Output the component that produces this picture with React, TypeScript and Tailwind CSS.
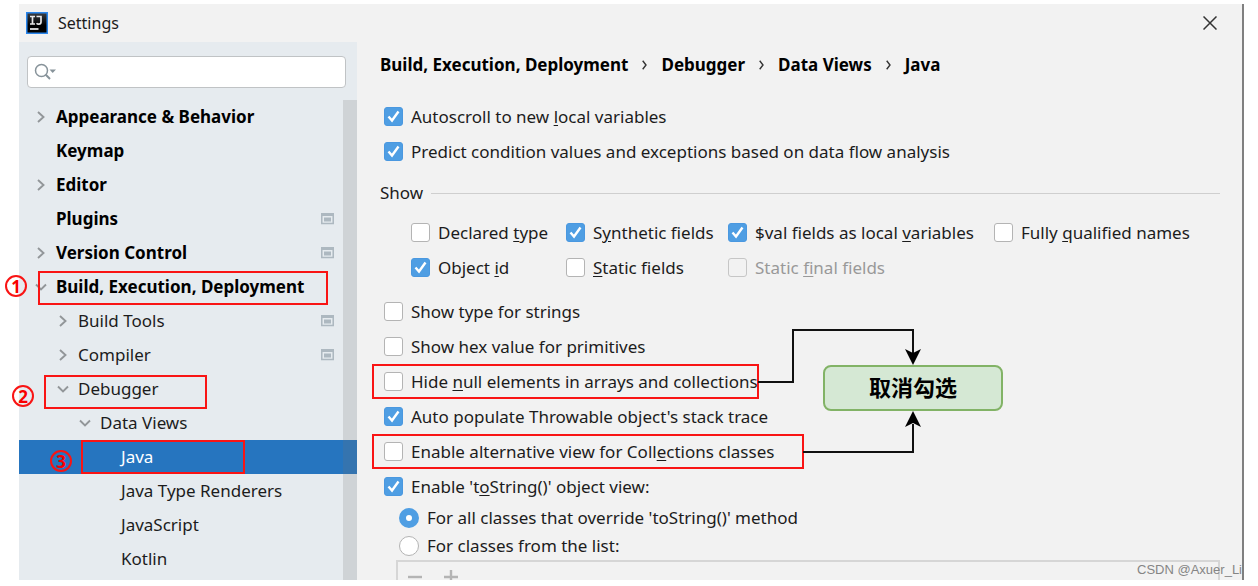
import clsx from 'clsx';
import { useState, type ReactNode } from 'react';

// ─── Types ──────────────────────────────
interface TreeItem {
	label: string;
	level: number;
	bold?: boolean;
	arrow?: 'right' | 'down';
	project?: boolean;
	step?: number;
}

interface Option {
	id: string;
	// "&" marks the mnemonic letter
	text: string;
	checked?: boolean;
	disabled?: boolean;
}

// ─── Data ───────────────────────────────
const TREE: TreeItem[] = [
	{ label: 'Appearance & Behavior', level: 0, bold: true, arrow: 'right' },
	{ label: 'Keymap', level: 0, bold: true },
	{ label: 'Editor', level: 0, bold: true, arrow: 'right' },
	{ label: 'Plugins', level: 0, bold: true, project: true },
	{ label: 'Version Control', level: 0, bold: true, arrow: 'right', project: true },
	{ label: 'Build, Execution, Deployment', level: 0, bold: true, arrow: 'down', step: 1 },
	{ label: 'Build Tools', level: 1, arrow: 'right', project: true },
	{ label: 'Compiler', level: 1, arrow: 'right', project: true },
	{ label: 'Debugger', level: 1, arrow: 'down', step: 2 },
	{ label: 'Data Views', level: 2, arrow: 'down' },
	{ label: 'Java', level: 3, step: 3 },
	{ label: 'Java Type Renderers', level: 3 },
	{ label: 'JavaScript', level: 3 },
	{ label: 'Kotlin', level: 3 },
];

const INDENT = ['pl-4', 'pl-[38px]', 'pl-[60px]', 'pl-[81px]'];

const STEP_BOX: Record<number, string> = {
	1: 'left-[19px] w-[290px] top-px',
	2: 'left-[25px] w-[163px] top-[3px]',
	3: 'left-[62px] w-[164px] top-0',
};

const STEP_BADGE: Record<number, string> = {
	1: '-left-[14px] top-[5px]',
	2: '-left-[7px] top-[13px]',
	3: 'left-[31px] top-[10px]',
};

const CRUMBS = ['Build, Execution, Deployment', 'Debugger', 'Data Views', 'Java'];

const GENERAL: Option[] = [
	{ id: 'autoscroll', text: 'Autoscroll to new &local variables', checked: true },
	{
		id: 'predict',
		text: 'Predict condition values and exceptions based on data flow analysis',
		checked: true,
	},
];

const SHOW: Option[] = [
	{ id: 'declared', text: 'Declared &type' },
	{ id: 'synthetic', text: 'S&ynthetic fields', checked: true },
	{ id: 'val', text: '$val fields as local &variables', checked: true },
	{ id: 'qualified', text: 'Fully &qualified names' },
	{ id: 'object-id', text: 'Object &id', checked: true },
	{ id: 'static', text: '&Static fields' },
	{ id: 'static-final', text: 'Static &final fields', disabled: true },
];

// ─── Icons ──────────────────────────────
function Arrow({ dir }: { dir?: 'right' | 'down' }) {
	return (
		<svg width="12" height="12" viewBox="0 0 12 12" fill="none" className="shrink-0">
			{dir && (
				<path
					d={dir === 'right' ? 'M3 1L8.5 6L3 11' : 'M1 3.5L6 8.5L11 3.5'}
					stroke="#929699"
					strokeWidth="1.9"
				/>
			)}
		</svg>
	);
}

function ProjectIcon() {
	return (
		<svg width="13" height="12" viewBox="0 0 13 12" fill="none" className="shrink-0">
			<path d="M0.75 1V10.5H12.25V1" stroke="#adb8c0" strokeWidth="1.6" />
			<path d="M0 1.5H13" stroke="#adb8c0" strokeWidth="3" />
			<path d="M3 4.5H10V8.5H3Z" fill="#adb8c0" />
		</svg>
	);
}

function IdeaLogo() {
	return (
		<svg width="22" height="22" viewBox="0 0 22 22" fill="none">
			<defs>
				<linearGradient id="idea" x1="0" y1="0" x2="0" y2="1">
					<stop offset="0" stopColor="#3c3f44" />
					<stop offset="0.6" stopColor="#000000" />
				</linearGradient>
			</defs>
			<rect x="0.75" y="0.75" width="20.5" height="20.5" fill="url(#idea)" stroke="#2a86ec" strokeWidth="1.5" />
			<path
				d="M4 4.5H9M6.5 4.5V12M4 12H9M10.5 4.5H15V10C15 11.6 14 12.2 12.8 12.2C11.8 12.2 11 11.8 10.6 11.2"
				stroke="#e8e8e8"
				strokeWidth="1.7"
			/>
			<path d="M4 17H12.5" stroke="#ffffff" strokeWidth="1.6" />
		</svg>
	);
}

// ─── Labels ─────────────────────────────
function Mnemonic({ text }: { text: string }) {
	const at = text.indexOf('&');
	if (at < 0) return <>{text}</>;
	return (
		<>
			{text.slice(0, at)}
			<u className="underline-offset-2">{text[at + 1]}</u>
			{text.slice(at + 2)}
		</>
	);
}

function Check({ option, children }: { option: Option; children?: ReactNode }) {
	const [on, setOn] = useState(!!option.checked);
	return (
		<div className="relative flex h-[35px] items-center">
			<label
				htmlFor={option.id}
				className={clsx(
					'flex items-center gap-2 whitespace-nowrap',
					option.disabled ? 'text-[#999999]' : 'text-[#1c1c1c]',
				)}
			>
				<span className="relative block size-[19px] shrink-0">
					<input
						id={option.id}
						type="checkbox"
						checked={on}
						disabled={option.disabled}
						onChange={(e) => setOn(e.target.checked)}
						className="block size-[19px] appearance-none rounded-[3px] border border-[#b4b4b4] bg-white checked:border-[#4a98e0] checked:bg-[#4f9ee3] disabled:border-[#c6c6c6] disabled:bg-[#f2f2f2]"
					/>
					{on && (
						<svg
							viewBox="0 0 19 19"
							fill="none"
							className="pointer-events-none absolute inset-0 size-[19px]"
						>
							<path d="M4.5 9.5L8 13.5L14.5 4.5" stroke="#ffffff" strokeWidth="2.4" />
						</svg>
					)}
				</span>
				<span>
					<Mnemonic text={option.text} />
				</span>
			</label>
			{children}
		</div>
	);
}

function Radio({ id, text, checked }: { id: string; text: string; checked?: boolean }) {
	return (
		<label htmlFor={id} className="flex h-7 items-center gap-2 text-[#1c1c1c]">
			<input
				id={id}
				type="radio"
				name="to-string"
				defaultChecked={checked}
				className="size-5 shrink-0 appearance-none rounded-full border border-[#b4b4b4] bg-white checked:border-[7px] checked:border-[#4f9ee3]"
			/>
			<span>{text}</span>
		</label>
	);
}

// ─── Sidebar ────────────────────────────
function TreeRow({ item, selected }: { item: TreeItem; selected: boolean }) {
	return (
		<li
			className={clsx(
				'relative flex h-[34px] items-center pr-[23px]',
				INDENT[item.level],
				selected ? 'bg-[#2675bf] text-white' : 'text-[#1c1c1c]',
			)}
		>
			<Arrow dir={item.arrow} />
			<span
				className={clsx(
					'ml-[9px] flex-1 whitespace-nowrap',
					item.bold && 'font-bold text-black',
				)}
			>
				{item.label}
			</span>
			{item.project && <ProjectIcon />}
			{item.step && (
				<>
					<span
						className={clsx(
							'pointer-events-none absolute h-[34px] border-2 border-[#f91414]',
							STEP_BOX[item.step],
						)}
					/>
					<span
						className={clsx(
							'absolute flex size-[22px] items-center justify-center rounded-full border-2 border-[#f91414] leading-none font-bold text-[#f90000]',
							STEP_BADGE[item.step],
						)}
					>
						{item.step}
					</span>
				</>
			)}
		</li>
	);
}

function Sidebar() {
	return (
		<aside className="flex w-[338px] shrink-0 flex-col bg-[#e6ebef] pt-[14px]">
			<div className="relative mr-[11px] ml-2">
				<input
					type="text"
					aria-label="Search settings"
					className="block h-8 w-full rounded-[4px] border border-[#c0c3c5] bg-white pl-8 outline-none"
				/>
				<svg
					width="24"
					height="18"
					viewBox="0 0 24 18"
					fill="none"
					className="pointer-events-none absolute top-[7px] left-[7px]"
				>
					<circle cx="7.5" cy="7.5" r="6" stroke="#87939a" strokeWidth="1.5" />
					<path d="M11.8 11.8L16 16" stroke="#87939a" strokeWidth="2" />
					<path d="M15.5 6.5H22L18.7 10Z" fill="#87939a" />
				</svg>
			</div>
			<div className="relative mt-3 flex-1">
				<ul>
					{TREE.map((item) => (
						<TreeRow key={item.label} item={item} selected={item.label === 'Java'} />
					))}
				</ul>
				<div className="absolute inset-y-0 right-0 w-[14px] bg-[#737373]/20" />
			</div>
		</aside>
	);
}

// ─── Callout over the options ───────────
function Callout() {
	return (
		<div className="pointer-events-none absolute top-[286px] left-[400px] h-[127px] w-[246px]">
			<svg width="246" height="127" viewBox="0 0 246 127" fill="none">
				<path d="M1 54H36V2H156V26" stroke="#111111" strokeWidth="2" />
				<path d="M46 124H156V96" stroke="#111111" strokeWidth="2" />
				<path d="M156 37L148 21L156 25L164 21Z" fill="#000000" />
				<path d="M156 83L148 99L156 95L164 99Z" fill="#000000" />
			</svg>
			<div className="absolute top-[37px] right-0 flex h-[46px] w-[180px] items-center justify-center rounded-lg border-2 border-[#82b366] bg-[#d5e8d4] pb-1 font-['Noto_Sans_CJK_SC',sans-serif] text-[22px] font-bold text-black">
				取消勾选
			</div>
		</div>
	);
}

// ─── Main panel ─────────────────────────
function Panel() {
	return (
		<main className="relative min-w-0 flex-1 pt-3 pr-[22px] pl-[23px]">
			<nav className="flex h-[22px] items-center gap-[14px] font-bold whitespace-nowrap text-black">
				{CRUMBS.map((crumb, i) => (
					<span key={crumb} className="flex items-center gap-[14px]">
						{i > 0 && (
							<svg width="5" height="10" viewBox="0 0 5 10" fill="none">
								<path d="M0.7 0.7L4 5L0.7 9.3" stroke="#333333" strokeWidth="1.4" />
							</svg>
						)}
						<a href="#" className="text-black">
							{crumb}
						</a>
					</span>
				))}
			</nav>

			<div className="mt-[23px] pl-1">
				{GENERAL.map((o) => (
					<Check key={o.id} option={o} />
				))}
			</div>

			<div className="mt-3 flex h-6 items-center gap-2 text-[#1c1c1c]">
				<h2>Show</h2>
				<div className="h-px flex-1 bg-[#cfcfcf]" />
			</div>

			<div className="mt-[10px] grid grid-cols-[155px_162px_266px_auto] pl-[31px]">
				{SHOW.map((o) => (
					<Check key={o.id} option={o} />
				))}
			</div>

			<div className="mt-[9px] pl-1">
				<Check option={{ id: 'type-strings', text: 'Show type for strings' }} />
				<Check option={{ id: 'hex', text: 'Show hex value for primitives' }} />
				<Check option={{ id: 'hide-null', text: 'Hide &null elements in arrays and collections' }}>
					<span className="pointer-events-none absolute inset-y-0 -left-3 w-[387px] border-2 border-[#f91414]" />
				</Check>
				<Check
					option={{
						id: 'throwable',
						text: "Auto populate Throwable object's stack trace",
						checked: true,
					}}
				/>
				<Check
					option={{ id: 'alt-view', text: 'Enable alternative view for Coll&ections classes' }}
				>
					<span className="pointer-events-none absolute inset-y-0 -left-3 w-[432px] border-2 border-[#f91414]" />
				</Check>
				<Check
					option={{ id: 'to-string-view', text: "Enable 't&oString()' object view:", checked: true }}
				/>
			</div>

			<div className="pl-[19px]">
				<Radio id="all-classes" text="For all classes that override 'toString()' method" checked />
				<Radio id="list-classes" text="For classes from the list:" />
			</div>

			<div className="ml-4 flex h-10 gap-[22px] border-2 border-[#d6d6d6] px-[10px] pt-2 text-[#b4b4b4]">
				<button type="button" aria-label="Remove" className="size-[14px]">
					<svg width="14" height="14" viewBox="0 0 14 14">
						<path d="M0 7H14" stroke="currentColor" strokeWidth="2.4" />
					</svg>
				</button>
				<button type="button" aria-label="Add" className="size-[14px]">
					<svg width="14" height="14" viewBox="0 0 14 14">
						<path d="M0 7H14M7 0V14" stroke="currentColor" strokeWidth="2.4" />
					</svg>
				</button>
			</div>

			<Callout />
		</main>
	);
}

export default function App() {
	return (
		<div className="flex h-screen flex-col overflow-hidden bg-white pt-1 pr-[14px] pb-[6px] pl-[19px] font-['Noto_Sans',sans-serif] text-[17px] leading-6">
			<div className="relative flex min-h-0 flex-1 flex-col border-r-2 border-[#808080] bg-[#f2f2f2] [clip-path:inset(0_0_0_-19px)]">
				<header className="flex h-[38px] shrink-0 items-center gap-[10px] pr-[25px] pl-[7px] text-[#1c1c1c]">
					<IdeaLogo />
					<h1 className="flex-1 text-[16px]">Settings</h1>
					<button type="button" aria-label="Close" className="size-[14px]">
						<svg width="14" height="14" viewBox="0 0 14 14" fill="none">
							<path d="M0.5 0.5L13.5 13.5M13.5 0.5L0.5 13.5" stroke="#333333" strokeWidth="1.5" />
						</svg>
					</button>
				</header>
				<div className="flex min-h-0 flex-1">
					<Sidebar />
					<Panel />
				</div>
				<div className="absolute right-0 bottom-0 font-['Liberation_Sans',sans-serif] text-[13px] leading-5 text-[#858585]">
					CSDN @Axuer_Li
				</div>
			</div>
		</div>
	);
}
